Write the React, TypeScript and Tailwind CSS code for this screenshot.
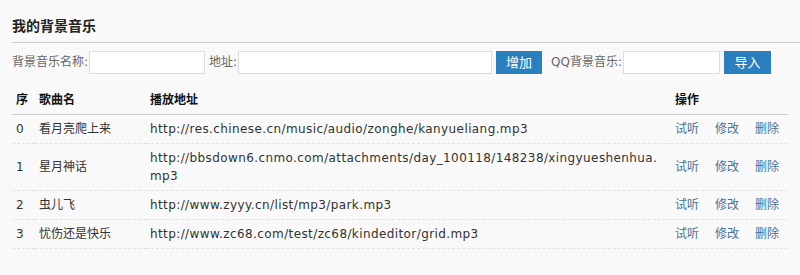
const songs = [
  { id: 0, name: "看月亮爬上来", url: "http://res.chinese.cn/music/audio/zonghe/kanyueliang.mp3" },
  {
    id: 1,
    name: "星月神话",
    url: "http://bbsdown6.cnmo.com/attachments/day_100118/148238/xingyueshenhua.mp3",
  },
  { id: 2, name: "虫儿飞", url: "http://www.zyyy.cn/list/mp3/park.mp3" },
  { id: 3, name: "忧伤还是快乐", url: "http://www.zc68.com/test/zc68/kindeditor/grid.mp3" },
];

export default function App() {
  return (
    <div className="w-[800px] h-[275px] bg-[#f9f9f9] text-[12px] text-[#333] font-['DejaVu_Sans','Noto_Sans_CJK_SC',sans-serif] overflow-hidden">
      <div className="ml-3 pt-4 pb-2 border-b border-[#cccccc]">
        <h2 className="text-[14px] leading-[18px] font-bold text-[#222] font-['Noto_Sans_CJK_SC',sans-serif]">
          我的背景音乐
        </h2>
      </div>

      <div className="mx-3 mt-2 flex items-center h-[23px] text-[#666]">
        <span className="leading-[23px]">背景音乐名称:</span>
        <input className="ml-px w-[116px] h-[23px] bg-white border border-[#dddddd] outline-none" />
        <span className="ml-1 leading-[23px]">地址:</span>
        <input className="ml-px w-[254px] h-[23px] bg-white border border-[#dddddd] outline-none" />
        <button className="ml-1 w-[46px] h-[23px] bg-[#2a7fbf] text-white text-[13px]">增加</button>
        <span className="ml-[9px] leading-[23px]">QQ背景音乐:</span>
        <input className="ml-px w-[97px] h-[23px] bg-white border border-[#dddddd] outline-none" />
        <button className="ml-1 w-[47px] h-[23px] bg-[#2a7fbf] text-white text-[13px]">导入</button>
      </div>

      <table className="mx-3 mt-3 w-[776px] table-fixed border-collapse leading-[18px]">
        <colgroup>
          <col className="w-[23px]" />
          <col className="w-[111px]" />
          <col className="w-[525px]" />
          <col />
        </colgroup>
        <thead>
          <tr className="border-b border-[#cccccc] text-left font-bold text-[#111]">
            <th className="pl-1 py-[5px]">序</th>
            <th className="pl-1 py-[5px]">歌曲名</th>
            <th className="pl-1 py-[5px]">播放地址</th>
            <th className="pl-1 py-[5px]">操作</th>
          </tr>
        </thead>
        <tbody>
          {songs.map((s) => (
            <tr key={s.id} className="border-b border-dashed border-[#e2e2e2]">
              <td className="pl-1 py-[5px] align-middle">{s.id}</td>
              <td className="pl-1 py-[5px] align-middle">{s.name}</td>
              <td className="pl-1 pr-3 py-[5px] align-middle break-all tracking-[0.4px]">{s.url}</td>
              <td className="pl-1 py-[5px] align-middle text-[#45739b]">
                <div className="flex gap-4">
                  <a>试听</a>
                  <a>修改</a>
                  <a>删除</a>
                </div>
              </td>
            </tr>
          ))}
        </tbody>
      </table>
    </div>
  );
}
